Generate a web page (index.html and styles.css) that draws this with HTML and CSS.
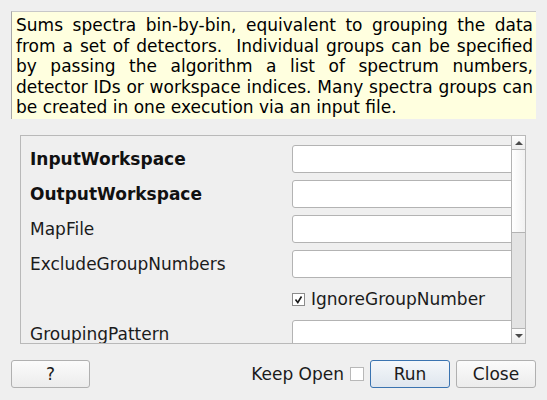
FILE: index.html
```html
<!DOCTYPE html>
<html>
<head>
<meta charset="utf-8">
<link rel="stylesheet" href="styles.css">
</head>
<body>
<div class="dialog">
  <div class="desc">Sums spectra bin-by-bin, equivalent to grouping the data from a set of detectors.&nbsp; Individual groups can be specified by passing the algorithm a list of spectrum numbers, detector IDs or workspace indices. Many spectra groups can be created in one execution via an input file.</div>

  <div class="props">
    <div class="props-body">
      <div class="grid">
        <div class="label bold">InputWorkspace</div>
        <div class="field"></div>
        <div class="label bold">OutputWorkspace</div>
        <div class="field"></div>
        <div class="label">MapFile</div>
        <div class="field"></div>
        <div class="label">ExcludeGroupNumbers</div>
        <div class="field"></div>
        <div class="label"></div>
        <div class="check-row">
          <span class="check checked"><svg width="11" height="11" viewBox="0 0 11 11"><polyline points="2.5,5.5 4.8,8.5 8.5,2.5" fill="none" stroke="#1a1a1a" stroke-width="1.6"/></svg></span>
          <span>IgnoreGroupNumber</span>
        </div>
        <div class="label">GroupingPattern</div>
        <div class="field"></div>
      </div>
    </div>
    <div class="vscroll">
      <div class="sb-btn sb-up"><span class="tri-up"></span></div>
      <div class="sb-handle"></div>
      <div class="sb-groove"></div>
      <div class="sb-btn sb-down"><span class="tri-down"></span></div>
    </div>
  </div>

  <div class="footer">
    <button class="btn help">?</button>
    <div class="spacer"></div>
    <span class="keep">Keep Open</span>
    <span class="check keep-check"></span>
    <button class="btn run">Run</button>
    <button class="btn">Close</button>
  </div>
</div>
</body>
</html>
```

FILE: styles.css
```css
html, body {
  margin: 0;
  padding: 0;
  background: #efefef;
  width: 547px;
  height: 400px;
  overflow: hidden;
  font-family: "DejaVu Sans", "Noto Sans", sans-serif;
  font-size: 17px;
  color: #1b1b1b;
}

.dialog {
  padding: 11px 11px 0 11px;
  display: flex;
  flex-direction: column;
}

.desc {
  background: #ffffdf;
  border-left: 1px solid #a8a8a8;
  border-top: 1px solid #c8c8c8;
  padding: 3px 3px 2px 4px;
  height: 102px;
  line-height: 20.5px;
  text-align: justify;
  color: #000;
}

.props {
  margin: 16px 10px 0 9px;
  height: 207px;
  border: 1px solid #b9b9b9;
  display: flex;
}

.props-body {
  flex: 1;
  overflow: hidden;
  padding: 9px 0 0 9px;
}

.grid {
  display: grid;
  grid-template-columns: 262px 240px;
  grid-auto-rows: 28px;
  row-gap: 7px;
  align-items: center;
}

.label {
  white-space: nowrap;
}

.bold {
  font-weight: bold;
  color: #111;
}

.field {
  height: 26px;
  background: #fff;
  border: 1px solid #b3b3b3;
  border-radius: 3px;
}

.check-row {
  display: flex;
  align-items: center;
  gap: 6px;
  height: 27px;
}

.check {
  width: 11px;
  height: 11px;
  border: 1px solid #8c8c8c;
  background: #fff;
  display: inline-flex;
  align-items: center;
  justify-content: center;
}

.vscroll {
  width: 13px;
  border-left: 1px solid #b3b3b3;
  display: flex;
  flex-direction: column;
  box-sizing: border-box;
  width: 14px;
}

.sb-btn {
  height: 14px;
  background: linear-gradient(#fdfdfd, #ececec);
  display: flex;
  align-items: center;
  justify-content: center;
}

.sb-up {
  border-bottom: 1px solid #b3b3b3;
  height: 13px;
}

.sb-down {
  border-top: 1px solid #b3b3b3;
  height: 14px;
}

.sb-handle {
  height: 82px;
  background: linear-gradient(90deg, #ffffff, #f1f1f1);
  border-bottom: 1px solid #b3b3b3;
}

.sb-groove {
  flex: 1;
  background: #e3e3e3;
}

.tri-up {
  width: 0;
  height: 0;
  border-left: 4px solid transparent;
  border-right: 4px solid transparent;
  border-bottom: 4px solid #4a4a4a;
}

.tri-down {
  width: 0;
  height: 0;
  border-left: 4px solid transparent;
  border-right: 4px solid transparent;
  border-top: 4px solid #4a4a4a;
}

.footer {
  margin-top: 16px;
  display: flex;
  align-items: center;
  height: 28px;
}

.spacer {
  flex: 1;
}

.btn {
  font-family: "DejaVu Sans", "Noto Sans", sans-serif;
  font-size: 17px;
  color: #1b1b1b;
  width: 80px;
  height: 28px;
  border: 1px solid #b0b0b0;
  border-radius: 3px;
  background: linear-gradient(#fbfbfb, #ececec);
  padding: 0;
  margin: 0;
}

.help {
  width: 79px;
}

.run {
  border-color: #3a73b0;
  background: linear-gradient(#f4f7fa, #dfe6ee);
  margin-left: 6px;
  margin-right: 6px;
}

.keep {
  margin-right: 6px;
}

.keep-check {
  width: 12px;
  height: 12px;
  border-color: #b8b8b8;
}
```
